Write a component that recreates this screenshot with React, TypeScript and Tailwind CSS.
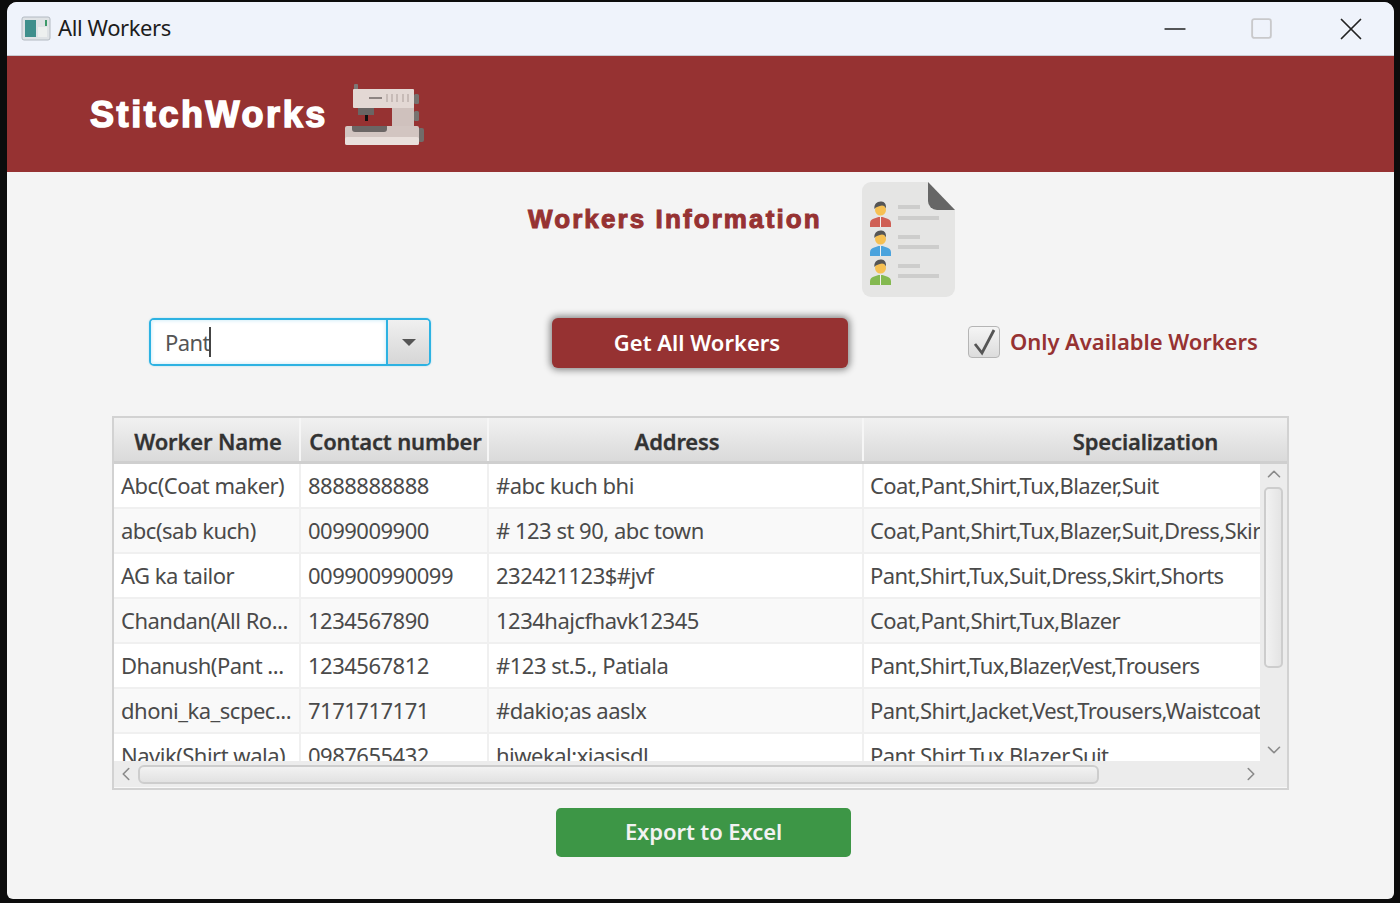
import { ChevronDown, ChevronLeft, ChevronRight, ChevronUp, Minus, Square, X } from 'lucide-react';

const rows = [
  ['Abc(Coat maker)', '8888888888', '#abc kuch bhi', 'Coat,Pant,Shirt,Tux,Blazer,Suit'],
  ['abc(sab kuch)', '0099009900', '# 123 st 90, abc town', 'Coat,Pant,Shirt,Tux,Blazer,Suit,Dress,Skirt,Shorts,Jacket'],
  ['AG ka tailor', '009900990099', '232421123$#jvf', 'Pant,Shirt,Tux,Suit,Dress,Skirt,Shorts'],
  ['Chandan(All Ro...', '1234567890', '1234hajcfhavk12345', 'Coat,Pant,Shirt,Tux,Blazer'],
  ['Dhanush(Pant ...', '1234567812', '#123 st.5., Patiala', 'Pant,Shirt,Tux,Blazer,Vest,Trousers'],
  ['dhoni_ka_scpec...', '7171717171', '#dakio;as aaslx', 'Pant,Shirt,Jacket,Vest,Trousers,Waistcoat,Suit'],
  ['Navik(Shirt wala)', '0987655432', 'hjwekal;xjasjsdl', 'Pant,Shirt,Tux,Blazer,Suit'],
];

function SewingMachine() {
  return (
    <svg width="100" height="80" viewBox="0 0 100 80" className="shrink-0">
      <rect x="19" y="9" width="4" height="6" rx="1" fill="#7d7877" />
      <rect x="79" y="19" width="5" height="10" rx="1.5" fill="#77726f" />
      <rect x="79" y="36" width="5" height="10" rx="1.5" fill="#77726f" />
      <rect x="83" y="53" width="6" height="14" rx="2" fill="#716c6a" />
      <rect x="57" y="30" width="22" height="22" fill="#cfc1bd" />
      <rect x="18" y="14" width="61" height="19" rx="1" fill="#e3d8d4" />
      <rect x="34" y="22" width="13" height="2" fill="#8d8482" />
      <rect x="51" y="19" width="2" height="8" fill="#c7bbb7" />
      <rect x="56" y="19" width="2" height="8" fill="#c7bbb7" />
      <rect x="61" y="19" width="2" height="8" fill="#c7bbb7" />
      <rect x="67" y="19" width="2" height="8" fill="#c7bbb7" />
      <rect x="72" y="19" width="2" height="8" fill="#c7bbb7" />
      <rect x="23" y="33" width="16" height="7" fill="#6a6564" />
      <rect x="30" y="40" width="3" height="6" fill="#111111" />
      <rect x="10" y="51" width="74" height="19" rx="2" fill="#d2c5c1" />
      <rect x="10" y="62" width="74" height="8" rx="2" fill="#e9e0dc" />
      <path d="M17 51h35v3a3 3 0 0 1-3 3H20a3 3 0 0 1-3-3z" fill="#6b6665" />
    </svg>
  );
}

function Person({ y, shirt }: { y: number; shirt: string }) {
  return (
    <g transform={`translate(0 ${y})`}>
      <path d="M20 52v-3.500a5 5 0 0 1 3.500-4.700l5-1.800h4l5 1.800a5 5 0 0 1 3.500 4.700v3.500z" fill={shirt} />
      <rect x="30" y="42" width="1" height="10" fill="#f1efee" />
      <circle cx="30.500" cy="35" r="5.500" fill="#f6c052" />
      <path d="M24.500 34c-1-5 3-8 7-7.500 3 0 5 3 4.500 7-1-2-2-3-4-3-3 1-6 1-7.500 3.500z" fill="#555555" />
    </g>
  );
}

function WorkersDoc() {
  return (
    <svg width="115" height="130" viewBox="0 0 115 130" className="shrink-0">
      <path d="M21 7h57l27 28v78a9 9 0 0 1-9 9H21a9 9 0 0 1-9-9V16a9 9 0 0 1 9-9z" fill="#e5e5e4" />
      <path d="M78 7l27 28H87a9 9 0 0 1-9-9z" fill="#666666" />
      <Person y={0} shirt="#cf5f55" />
      <Person y={29} shirt="#4ba3dd" />
      <Person y={58} shirt="#84b950" />
      {[30, 60, 89].map((y) => (
        <rect key={y} x="48" y={y} width="22" height="4" fill="#cdcdcc" />
      ))}
      {[41, 70, 99].map((y) => (
        <rect key={y} x="48" y={y} width="41" height="4" fill="#cdcdcc" />
      ))}
    </svg>
  );
}

function AppIcon() {
  return (
    <svg width="30" height="26" viewBox="0 0 30 26">
      <rect x="1" y="1" width="28" height="23" rx="2" fill="#dfe3e6" stroke="#b3bac2" />
      <rect x="4" y="4" width="11" height="17" fill="#3f8f8c" />
      <rect x="17" y="11" width="9" height="10" fill="#edf0ef" />
      <rect x="24" y="4" width="2" height="6" fill="#3d9a6a" />
    </svg>
  );
}

export default function App() {
  return (
    <div className="w-[1400px] h-[903px] bg-[#0c0c0c] pt-[2px] pl-[7px] pr-[6px] pb-[4px] font-['Noto_Sans',sans-serif]">
      <div className="h-full bg-[#f4f4f4] rounded-t-[10px] rounded-b-[6px] overflow-hidden flex flex-col">
        <div className="h-[54px] shrink-0 bg-[#eff3fb] border-b border-[#c9c9d0] flex items-center pl-[14px]">
          <AppIcon />
          <span className="ml-[7px] pb-[2px] text-[22px] text-[#1c1c1c] tracking-[-0.4px]">All Workers</span>
          <div className="ml-auto flex items-center">
            <Minus size={34} strokeWidth={1.1} className="text-[#222222] mr-[57px]" />
            <Square size={25} strokeWidth={1.8} className="text-[#c9c9cb] mr-[58px]" />
            <X size={38} strokeWidth={1.1} className="text-[#222222] mr-[24px]" />
          </div>
        </div>

        <div className="h-[116px] shrink-0 bg-[#963232] flex items-center pl-[83px]">
          <span className="pt-[2px] font-['Liberation_Sans',Arial,sans-serif] font-bold text-[36px] text-white tracking-[2.6px] [-webkit-text-stroke:1.5px_white]">
            StitchWorks
          </span>
          <div className="ml-[7px] mt-[2px]">
            <SewingMachine />
          </div>
        </div>

        <div className="flex pl-[521px] pt-[4px] h-[145px] shrink-0">
          <span className="mt-[25px] font-['Liberation_Sans',Arial,sans-serif] font-bold text-[26px] leading-[36px] text-[#963232] tracking-[2.1px] [-webkit-text-stroke:1px_#963232] whitespace-nowrap">
            Workers Information
          </span>
          <div className="ml-[28px] mt-[-1px]">
            <WorkersDoc />
          </div>
        </div>

        <div className="flex items-start h-[99px] shrink-0 pt-[1px]">
          <div className="ml-[142px] w-[282px] h-[48px] rounded-[5px] border-2 border-[#2db2e2] flex overflow-hidden shadow-[0_0_2px_#a5dcf0]">
            <div className="flex-1 bg-white pl-[14px] flex items-center shadow-[inset_0_0_4px_#bfe7f5]">
              <span className="text-[22px] text-[#555555] tracking-[-0.6px]">Pant</span>
              <span className="w-[2px] h-[30px] bg-[#444444] ml-[-1px]" />
            </div>
            <div className="w-[43px] border-l-2 border-[#2db2e2] bg-gradient-to-b from-[#f0f0f0] to-[#d6d6d6] flex items-center justify-center">
              <div className="w-0 h-0 border-x-[7px] border-x-transparent border-t-[7px] border-t-[#555555]" />
            </div>
          </div>
          <button className="ml-[121px] w-[296px] h-[50px] rounded-[6px] bg-[#963232] text-white font-semibold text-[22px] tracking-[0px] pr-[6px] pb-[2px] shadow-[0_0_7px_2px_rgba(0,0,0,0.45)]">
            Get All Workers
          </button>
          <div className="ml-[120px] mt-[8px] flex items-center h-[32px]">
            <div className="w-[32px] h-[32px] rounded-[4px] border border-[#b5b5b5] bg-gradient-to-b from-[#f5f5f5] to-[#dcdcdc]">
              <svg width="30" height="30" viewBox="0 0 30 30" fill="none">
                <path d="M6 17l7 9L25 3" stroke="#555555" strokeWidth="2.8" />
              </svg>
            </div>
            <span className="ml-[10px] pb-[1px] font-semibold text-[22px] text-[#963232] tracking-[-0.05px] whitespace-nowrap">
              Only Available Workers
            </span>
          </div>
        </div>

        <div className="ml-[105px] w-[1177px] h-[374px] shrink-0 border-2 border-[#d2d2d2] flex flex-col overflow-hidden">
          <div className="h-[46px] shrink-0 grid grid-cols-[187px_188px_375px_1fr] border-b-[3px] border-[#cfcfcf] bg-gradient-to-b from-[#f1f1f1] to-[#dadada]">
            {['Worker Name', 'Contact number', 'Address'].map((label) => (
              <div key={label} className="pt-[3px] pl-[3px] border-r-2 border-[#f6f6f6] flex items-center justify-center font-semibold text-[22px] text-[#333333] tracking-[-0.15px] [-webkit-text-stroke:0.3px_#333333] whitespace-nowrap overflow-hidden">
                {label}
              </div>
            ))}
            <div className="pt-[3px] flex items-center justify-center pl-[140px] font-semibold text-[22px] text-[#333333] tracking-[-0.15px] [-webkit-text-stroke:0.3px_#333333]">
              Specialization
            </div>
          </div>

          <div className="flex-1 min-h-0 flex">
            <div className="flex-1 min-w-0 overflow-hidden">
              {rows.map((row, i) => (
                <div key={row[0]} className={`h-[45px] grid grid-cols-[187px_188px_375px_1fr] border-b-2 border-[#f0f0f0] ${i % 2 === 1 ? 'bg-[#f9f9f9]' : 'bg-white'}`}>
                  {row.map((cell, j) => (
                    <div key={j} className={`flex items-center text-[22px] text-[#4a4a4a] whitespace-nowrap overflow-hidden ${j < 3 ? 'pl-[7px] tracking-[-0.5px] border-r-2 border-[#f0f0f0]' : 'pl-[6px] tracking-[-0.6px]'}`}>
                      {cell}
                    </div>
                  ))}
                </div>
              ))}
            </div>
            <div className="w-[27px] shrink-0 bg-[#ececec] flex flex-col items-center">
              <ChevronUp size={22} strokeWidth={1.75} className="text-[#8a8a8a] mt-[-1px] shrink-0" />
              <div className="w-[19px] h-[181px] mt-[2px] rounded-[5px] border-2 border-[#cdcdcd] bg-gradient-to-r from-[#f2f2f2] to-[#e4e4e4] shrink-0" />
              <ChevronDown size={22} strokeWidth={1.75} className="text-[#8a8a8a] mt-auto shrink-0" />
            </div>
          </div>

          <div className="h-[27px] shrink-0 bg-[#ececec] flex items-center pl-[1px] border-b border-[#f8f8f8]">
            <ChevronLeft size={22} strokeWidth={1.75} className="text-[#8a8a8a] shrink-0" />
            <div className="ml-[1px] w-[961px] h-[19px] rounded-[6px] border-2 border-[#cdcdcd] bg-gradient-to-b from-[#f2f2f2] to-[#e2e2e2] shrink-0" />
            <ChevronRight size={22} strokeWidth={1.75} className="text-[#8a8a8a] ml-[141px] shrink-0" />
          </div>
        </div>

        <div className="flex pl-[549px] pt-[18px]">
          <button className="w-[295px] h-[49px] rounded-[5px] bg-[#3d9646] text-[#f2f2f2] font-semibold text-[22px] tracking-[-0.1px] pb-[3px]">
            Export to Excel
          </button>
        </div>
      </div>
    </div>
  );
}
